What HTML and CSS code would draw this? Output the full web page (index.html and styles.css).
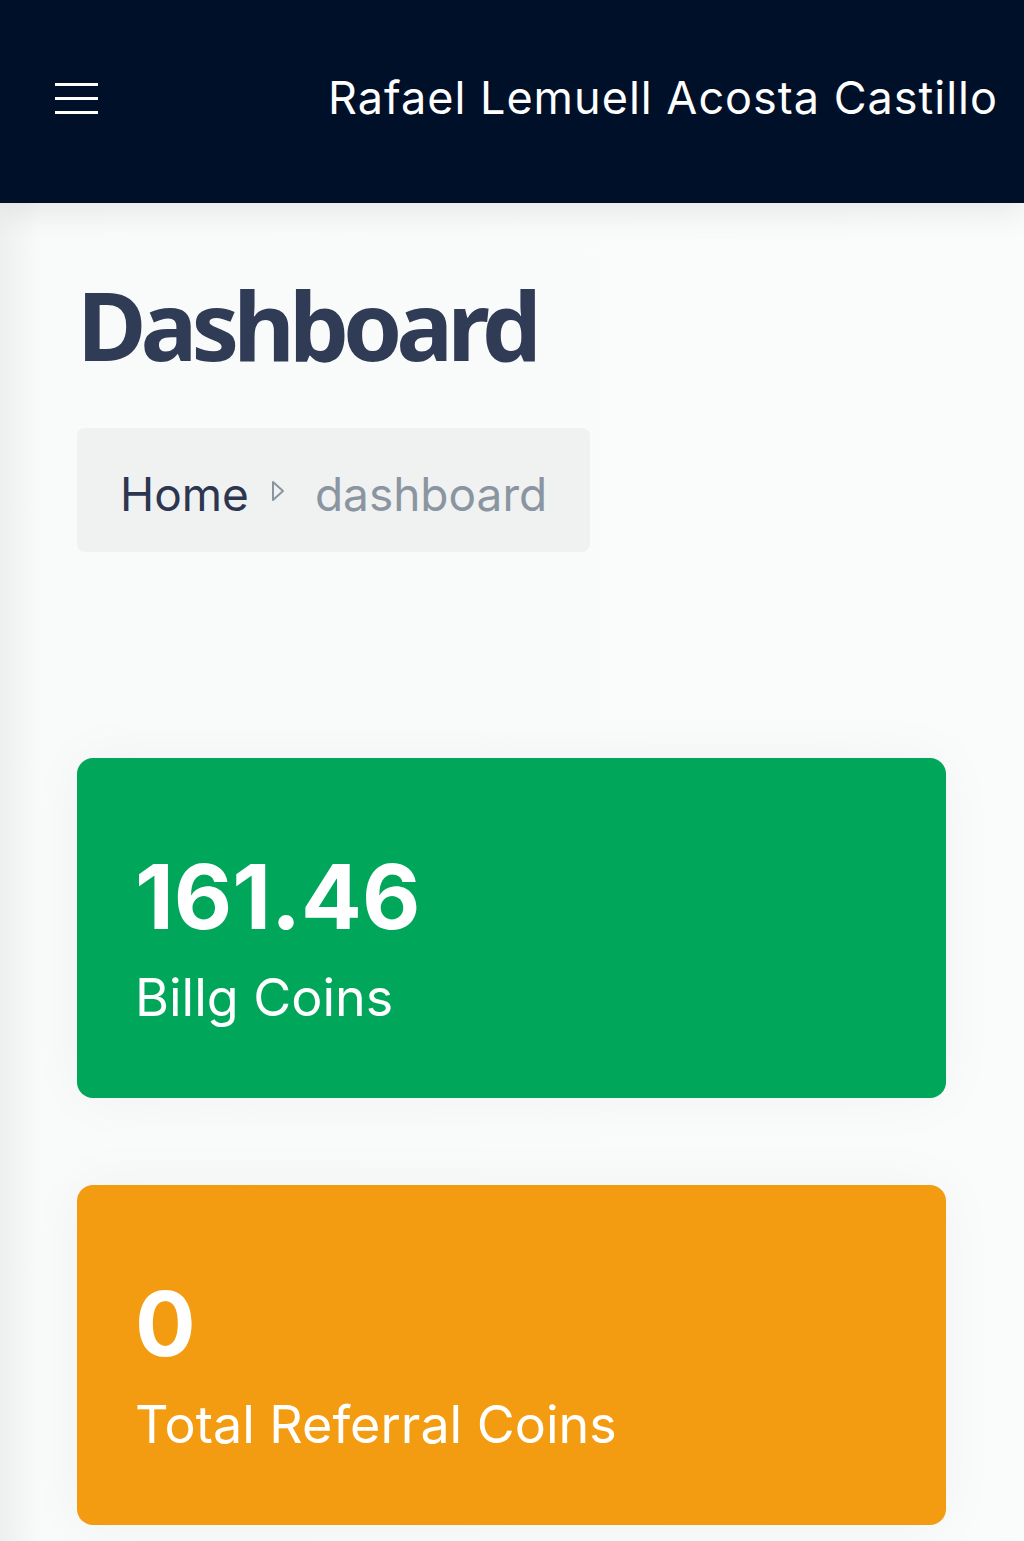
FILE: index.html
```html
<!DOCTYPE html>
<html lang="en">
  <head>
    <meta charset="UTF-8" />
    <meta name="viewport" content="width=device-width, initial-scale=1.0" />
    <title>Dashboard</title>
    <link rel="stylesheet" href="styles.css">
  </head>
  <body>
    <header class="topbar">
      <button class="menu-toggle" aria-label="Menu">
        <span></span><span></span><span></span>
      </button>
      <div class="user-name">Rafael Lemuell Acosta Castillo</div>
    </header>

    <main class="content">
      <section class="content-header">
        <h1 class="page-title">Dashboard</h1>
        <nav class="breadcrumb">
          <span class="crumb">Home</span>
          <svg class="crumb-sep" width="14" height="24" viewBox="0 0 14 24">
            <path d="M2 3 L12 12 L2 21 Z" fill="none" stroke="#8a95a1" stroke-width="2" stroke-linejoin="round" />
          </svg>
          <span class="crumb active">dashboard</span>
        </nav>
      </section>

      <section class="stats">
        <div class="stat-card green">
          <div class="stat-value">161.46</div>
          <div class="stat-label">Billg Coins</div>
        </div>
        <div class="stat-card orange">
          <div class="stat-value">0</div>
          <div class="stat-label">Total Referral Coins</div>
        </div>
      </section>
    </main>
  </body>
</html>
```

FILE: styles.css
```css
body {
  margin: 0;
  background-color: #f3f4f4;
  font-family: Inter, "Noto Sans", sans-serif;
}
.topbar {
  height: 203px;
  background-color: #001029;
  display: flex;
  align-items: center;
  justify-content: space-between;
  padding: 0 26px 0 55px;
  box-sizing: border-box;
  box-shadow: 0 10px 30px rgba(0, 0, 0, 0.08);
  position: relative;
}
.menu-toggle {
  background: none;
  border: none;
  padding: 0;
  width: 43px;
  display: flex;
  flex-direction: column;
  gap: 11px;
  margin-top: -6px;
  cursor: pointer;
}
.menu-toggle span {
  display: block;
  height: 3px;
  background-color: #ffffff;
}
.user-name {
  color: #ffffff;
  font-size: 45px;
  margin-top: -8px;
  letter-spacing: 1px;
}
.content {
  background: linear-gradient(to right, #eef0f0 0, #f9fafa 40px, #fafbfb 100%);
  padding: 0 78px 20px 77px;
}
.content-header {
  padding-top: 74px;
  padding-bottom: 206px;
}
.page-title {
  margin: 0;
  font-family: "Noto Sans", sans-serif;
  font-weight: 700;
  font-size: 95px;
  line-height: 1;
  color: #303b56;
  letter-spacing: -6px;
}
.breadcrumb {
  display: inline-flex;
  align-items: center;
  gap: 22px;
  margin-top: 56px;
  height: 124px;
  padding: 8px 43px 0 43px;
  box-sizing: border-box;
  background-color: #f0f1f1;
  border-radius: 8px;
}
.crumb {
  font-size: 46px;
  color: #2c3650;
}
.crumb-sep {
  margin-top: -6px;
}
.crumb.active {
  color: #8a95a1;
  margin-left: 8px;
}
.stats {
  display: flex;
  flex-direction: column;
  gap: 87px;
}
.stat-card {
  height: 340px;
  border-radius: 16px;
  color: #ffffff;
  padding: 94px 58px 0 58px;
  box-sizing: border-box;
  box-shadow: 0 0 60px rgba(0, 0, 0, 0.04);
}
.green {
  background-color: #00a65a;
}
.orange {
  background-color: #f39c12;
}
.stat-value {
  font-size: 90px;
  font-weight: 700;
  line-height: 1;
}
.stat-label {
  font-size: 52px;
  margin-top: 30px;
  line-height: 1;
}
```
